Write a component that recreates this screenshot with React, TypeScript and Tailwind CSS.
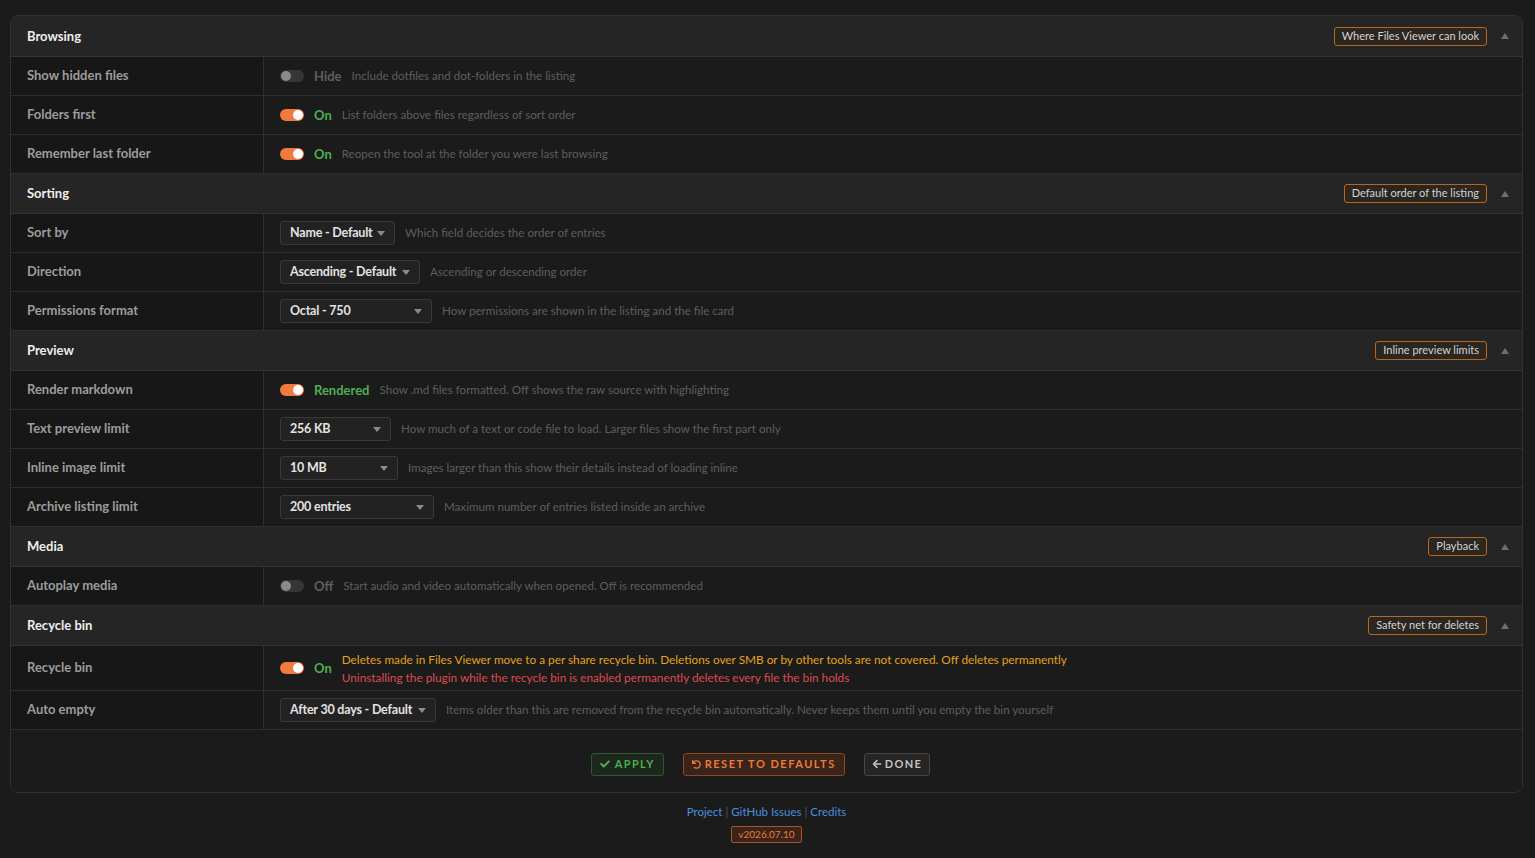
import React from 'react';
import { FaCheck, FaUndo, FaArrowLeft } from 'react-icons/fa';

type Row =
  | { label: string; kind: 'toggle'; on: boolean; state: string; desc: string }
  | { label: string; kind: 'select'; value: string; width: string; desc: string }
  | { label: string; kind: 'recycle' };

type Section = { title: string; badge: string; rows: Row[] };

const sections: Section[] = [
  {
    title: 'Browsing',
    badge: 'Where Files Viewer can look',
    rows: [
      { label: 'Show hidden files', kind: 'toggle', on: false, state: 'Hide', desc: 'Include dotfiles and dot-folders in the listing' },
      { label: 'Folders first', kind: 'toggle', on: true, state: 'On', desc: 'List folders above files regardless of sort order' },
      { label: 'Remember last folder', kind: 'toggle', on: true, state: 'On', desc: 'Reopen the tool at the folder you were last browsing' },
    ],
  },
  {
    title: 'Sorting',
    badge: 'Default order of the listing',
    rows: [
      { label: 'Sort by', kind: 'select', value: 'Name - Default', width: 'w-[115px]', desc: 'Which field decides the order of entries' },
      { label: 'Direction', kind: 'select', value: 'Ascending - Default', width: 'w-[140px]', desc: 'Ascending or descending order' },
      { label: 'Permissions format', kind: 'select', value: 'Octal - 750', width: 'w-[152px]', desc: 'How permissions are shown in the listing and the file card' },
    ],
  },
  {
    title: 'Preview',
    badge: 'Inline preview limits',
    rows: [
      { label: 'Render markdown', kind: 'toggle', on: true, state: 'Rendered', desc: 'Show .md files formatted. Off shows the raw source with highlighting' },
      { label: 'Text preview limit', kind: 'select', value: '256 KB', width: 'w-[111px]', desc: 'How much of a text or code file to load. Larger files show the first part only' },
      { label: 'Inline image limit', kind: 'select', value: '10 MB', width: 'w-[118px]', desc: 'Images larger than this show their details instead of loading inline' },
      { label: 'Archive listing limit', kind: 'select', value: '200 entries', width: 'w-[154px]', desc: 'Maximum number of entries listed inside an archive' },
    ],
  },
  {
    title: 'Media',
    badge: 'Playback',
    rows: [
      { label: 'Autoplay media', kind: 'toggle', on: false, state: 'Off', desc: 'Start audio and video automatically when opened. Off is recommended' },
    ],
  },
  {
    title: 'Recycle bin',
    badge: 'Safety net for deletes',
    rows: [
      { label: 'Recycle bin', kind: 'recycle' },
      { label: 'Auto empty', kind: 'select', value: 'After 30 days - Default', width: 'w-[156px]', desc: 'Items older than this are removed from the recycle bin automatically. Never keeps them until you empty the bin yourself' },
    ],
  },
];

const Toggle = ({ on }: { on: boolean }) => (
  <span
    className={`relative inline-block w-6 h-3 rounded-full shrink-0 ${on ? 'bg-[#f07b3c]' : 'bg-[#363636]'}`}
  >
    <span
      className={`absolute top-[1px] w-[10px] h-[10px] rounded-full ${on ? 'right-[1px] bg-white' : 'left-[1px] bg-[#8a8a8a]'}`}
    />
  </span>
);

const Caret = () => (
  <span className="w-0 h-0 border-l-[4px] border-r-[4px] border-t-[5px] border-l-transparent border-r-transparent border-t-[#8a8a8a]" />
);

const Value = ({ row }: { row: Row }) => {
  if (row.kind === 'toggle') {
    return (
      <div className="flex items-center whitespace-nowrap">
        <Toggle on={row.on} />
        <span className={`ml-[10px] mt-[2px] text-[13px] font-bold ${row.on ? 'text-[#4caf50]' : 'text-[#5f5f5f]'}`}>
          {row.state}
        </span>
        <span className="ml-[10px] text-[11.6px] text-[#5e5e5e]">{row.desc}</span>
      </div>
    );
  }
  if (row.kind === 'select') {
    return (
      <div className="flex items-center whitespace-nowrap">
        <div
          className={`${row.width} h-[24px] flex items-center justify-between pl-[9px] pr-[9px] rounded-[3px] border border-[#393939] bg-[#222222] text-[12.5px] font-bold tracking-[-0.2px] text-[#e2e2e2]`}
        >
          <span>{row.value}</span>
          <Caret />
        </div>
        <span className="ml-[10px] text-[11.6px] text-[#5e5e5e]">{row.desc}</span>
      </div>
    );
  }
  return (
    <div className="flex items-center whitespace-nowrap">
      <Toggle on />
      <span className="ml-[10px] mt-[2px] text-[13px] font-bold text-[#4caf50]">On</span>
      <div className="ml-[10px] mt-[2px] flex flex-col text-[11.8px] leading-[18px]">
        <span className="text-[#e3a21a]">
          Deletes made in Files Viewer move to a per share recycle bin. Deletions over SMB or by other tools are not covered. Off deletes permanently
        </span>
        <span className="text-[#dc4d4d]">
          Uninstalling the plugin while the recycle bin is enabled permanently deletes every file the bin holds
        </span>
      </div>
    </div>
  );
};

const App = () => {
  return (
    <div
      className="min-h-screen bg-[#1c1b1b] pt-[15px] pl-[10px] pr-[12px] pb-4"
      style={{ fontFamily: 'Lato, "Open Sans", sans-serif' }}
    >
      <div className="rounded-lg border border-[#313131] bg-[#1b1b1b] overflow-hidden">
        {sections.map((s, i) => (
          <div key={s.title}>
            <div
              className={`${i === 0 ? 'h-[41px]' : 'h-10'} flex items-center justify-between pl-4 pr-[13px] bg-[#252525] border-b border-[#333333]`}
            >
              <span className="mt-[1px] text-[13px] font-bold text-[#eeeeee]">{s.title}</span>
              <div className="flex items-center gap-[14px]">
                <span className="h-[19px] flex items-center px-[7px] rounded-[3px] border border-[#b5671f] bg-[#2b2620] text-[11px] text-[#d4d4d4]">
                  {s.badge}
                </span>
                <span className="w-0 h-0 border-l-[4px] border-r-[4px] border-b-[6px] border-l-transparent border-r-transparent border-b-[#6e6e6e]" />
              </div>
            </div>
            {s.rows.map((r) => (
              <div
                key={r.label}
                className={`grid grid-cols-[253px_1fr] border-b border-[#2e2e2e] ${r.kind === 'recycle' ? 'h-[45px]' : 'h-[39px]'}`}
              >
                <div className="flex items-center px-4 bg-[#171717] border-r border-[#2e2e2e] text-[13px] font-bold text-[#9c9c9c]">
                  {r.label}
                </div>
                <div className="flex items-center px-4 bg-[#1b1b1b]">
                  <Value row={r} />
                </div>
              </div>
            ))}
          </div>
        ))}
        <div className="h-[62px] pt-[6px] pr-[12px] flex items-center justify-center gap-[19px] bg-[#1b1b1b]">
          <button className="h-[23px] flex items-center gap-[5px] px-[8px] rounded-[3px] border border-[#2c5a2e] bg-[#1d271d] text-[11px] font-bold tracking-[1.4px] text-[#4caf50]">
            <FaCheck size={10} />
            APPLY
          </button>
          <button className="h-[23px] flex items-center gap-[4px] px-[8px] rounded-[3px] border border-[#8c4724] bg-[#3a2419] text-[11px] font-bold tracking-[1.5px] text-[#ec7a3c]">
            <FaUndo size={9} />
            RESET TO DEFAULTS
          </button>
          <button className="h-[23px] flex items-center gap-[3px] px-[7px] rounded-[3px] border border-[#464646] bg-[#252525] text-[11px] font-bold tracking-[1.4px] text-[#c2c2c2]">
            <FaArrowLeft size={10} />
            DONE
          </button>
        </div>
      </div>
      <div className="flex flex-col items-center mt-[10px]">
        <div className="flex items-center text-[11.5px] text-[#4a8fdc]">
          <span>Project</span>
          <span className="mx-[3px] text-[#555555]">|</span>
          <span>GitHub Issues</span>
          <span className="mx-[3px] text-[#555555]">|</span>
          <span>Credits</span>
        </div>
        <span className="mt-[6px] h-[17px] flex items-center px-[6px] rounded-[2px] border border-[#a9552a] bg-[#3a2419] text-[10px] text-[#ec7a3c]">
          v2026.07.10
        </span>
      </div>
    </div>
  );
};

export default App;
